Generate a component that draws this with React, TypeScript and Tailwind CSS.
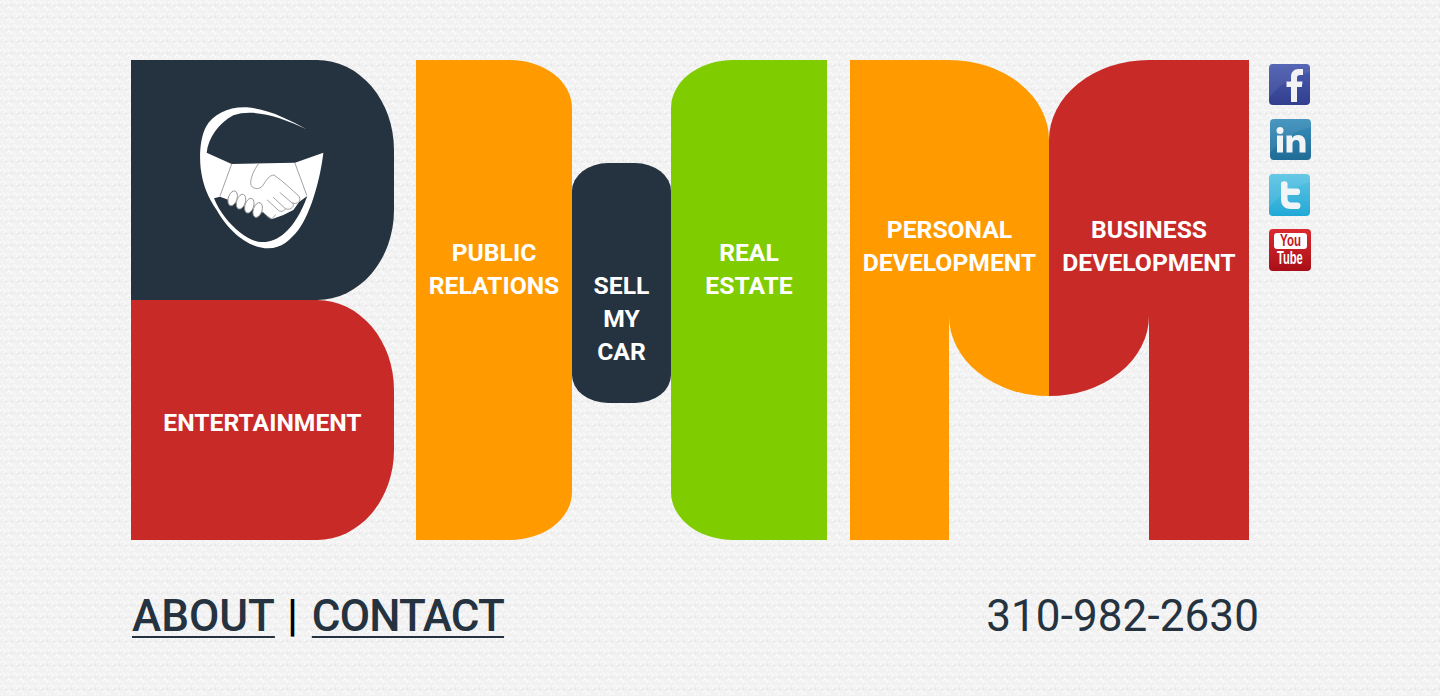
import React from "react";

const font = "font-['Roboto','Liberation_Sans',sans-serif]";

function Backdrop() {
  return (
    <svg className="absolute inset-0 w-full h-full" aria-hidden="true">
      <defs>
        <pattern id="weave" width="12" height="12" patternUnits="userSpaceOnUse">
          <rect width="12" height="12" fill="#f1f1f1" />
          <path d="M0 3 L3 1 L6 3 L4 5 M6 9 L9 7 L12 9 L10 11 M7 1 L10 3 M1 8 L3 11" stroke="#fbfbfb" strokeWidth="1.3" fill="none" />
          <path d="M5 6 L7 5 M11 4 L12 6 M2 6 L1 5" stroke="#e4e4e4" strokeWidth="1" fill="none" />
        </pattern>
      </defs>
      <rect width="100%" height="100%" fill="url(#weave)" />
    </svg>
  );
}

function Logo() {
  return (
    <svg width="145" height="155" viewBox="0 0 435 465" className="block">
      <path
        d="M350 88 C300 60 235 26 170 22 C115 20 70 42 48 80 C30 115 28 165 32 205 C38 255 55 295 80 330 C110 385 170 445 235 445 C275 445 300 420 325 390 C365 335 392 230 400 158 L315 188 L125 192 L50 158 C55 115 85 70 130 46 C190 25 270 50 350 88 Z"
        fill="#fff"
      />
      <path
        d="M72 295 L90 290 L220 338 L245 358 L280 345 L310 330 L328 305 L352 288 C335 335 312 375 285 398 C262 418 238 428 210 426 C175 422 135 390 105 352 C92 335 80 315 72 295 Z"
        fill="#253340"
      />
      <g fill="none" stroke="#8f8f8f" strokeWidth="2.5" strokeLinecap="round" strokeLinejoin="round">
        <path d="M125 192 L90 288" />
        <path d="M315 190 L350 285" />
        <path d="M205 192 C192 210 182 232 182 250 C184 268 208 272 220 255 C228 240 238 226 252 225 C280 245 305 268 328 290 C334 305 320 315 308 309" />
        <path d="M270 278 L310 312 C312 322 298 332 286 326 L250 292" />
        <path d="M286 327 C280 336 270 336 264 330 L232 300" />
        <path d="M256 345 C250 358 240 358 232 350 L218 335" />
      </g>
      <g fill="#fff" stroke="#8f8f8f" strokeWidth="2.5">
        <ellipse cx="128" cy="295" rx="13" ry="23" transform="rotate(18 128 295)" />
        <ellipse cx="153" cy="305" rx="13" ry="23" transform="rotate(18 153 305)" />
        <ellipse cx="178" cy="317" rx="13" ry="23" transform="rotate(18 178 317)" />
        <ellipse cx="203" cy="330" rx="13" ry="23" transform="rotate(18 203 330)" />
      </g>
    </svg>
  );
}

const gloss = "M0 0 H41 V8 C26 12 10 20 0 34 Z";

function Social() {
  return (
    <div className="flex flex-col ml-[20px] mt-[4px]">
      <div className="w-[41px] h-[41px] rounded-[4px] bg-gradient-to-b from-[#4a5cb0] to-[#333f8e] overflow-hidden">
        <svg viewBox="0 0 41 41" width="41" height="41">
          <path d={gloss} fill="#fff" opacity="0.07" />
          <path d="M22 38 V23 H17.5 V17.5 H22 V13 C22 8 25 5 29.5 5 H34 V11 H31 C28.8 11 28 12 28 14 V17.5 H33.5 L32.8 23 H28 V38 Z" fill="#f2f2f4" />
        </svg>
      </div>
      <div className="w-[41px] h-[41px] rounded-[4px] bg-gradient-to-b from-[#3a8fbd] to-[#1f6c96] overflow-hidden mt-[14px] ml-[1px]">
        <svg viewBox="0 0 41 41" width="41" height="41" fill="#f2f4f6">
          <path d={gloss} fill="#fff" opacity="0.07" />
          <circle cx="10" cy="11.5" r="3.5" />
          <rect x="7" y="16.5" width="6" height="17" />
          <path d="M16.5 16.5 H22 V19 C23.5 17 25.5 16 28 16 C33 16 35.5 19 35.5 24 V33.5 H29.5 V25 C29.5 22.5 28.5 21 26.3 21 C24 21 22.5 22.6 22.5 25 V33.5 H16.5 Z" />
        </svg>
      </div>
      <div className="w-[41px] h-[42px] rounded-[4px] bg-gradient-to-b from-[#5cc4e4] to-[#1ea9d6] overflow-hidden mt-[14px]">
        <svg viewBox="0 0 41 42" width="41" height="42">
          <path d={gloss} fill="#fff" opacity="0.07" />
          <path d="M12 9.5 C12 6.5 18.5 6.5 18.5 9.5 V14.5 H28.5 C32 14.5 32 21 28.5 21 H18.5 V24.5 C18.5 27 20 28.5 22.5 28.5 H28.5 C32.5 28.5 32.5 35 28.5 35 H21.5 C15.5 35 12 31 12 25.5 Z" fill="#f1f5f7" />
        </svg>
      </div>
      <div className="w-[42px] h-[42px] rounded-[4px] bg-gradient-to-b from-[#dc2a30] to-[#a80f18] flex flex-col items-center mt-[13px] pt-[4px]">
        <div className="w-[33px] h-[16px] rounded-[3px] bg-white text-center">
          <div className="text-[#c6161e] text-[16px] leading-[16px] font-bold font-['Liberation_Sans',sans-serif] scale-x-[0.72]">You</div>
        </div>
        <div className="text-white text-[18px] leading-[19px] font-bold font-['Liberation_Sans',sans-serif] scale-x-[0.62]">
          Tube
        </div>
      </div>
    </div>
  );
}

const label = "text-white text-[24.7px] leading-[33px] font-bold text-center uppercase";

export default function App() {
  return (
    <div className={`relative h-[696px] overflow-hidden ${font}`}>
      <Backdrop />
      <div className="relative pl-[131px] pt-[60px]">
        <div className="flex items-start h-[480px]">
          <div className="flex flex-col w-[263px] mr-[22px]">
            <div className="h-[240px] bg-[#253340] rounded-tr-[77px_90px] rounded-br-[77px_90px] pl-[59px] pt-[40px]">
              <Logo />
            </div>
            <div className={`h-[240px] bg-[#c82a28] rounded-tr-[77px_90px] rounded-br-[77px_90px] pt-[106px] ${label}`}>
              Entertainment
            </div>
          </div>

          <div className={`w-[156px] h-[480px] bg-[#ff9a00] rounded-tr-[62px_48px] rounded-br-[62px_48px] pt-[176px] ${label}`}>
            Public<br />Relations
          </div>
          <div className={`w-[99px] h-[240px] mt-[103px] bg-[#253340] rounded-[36px/28px] pt-[106px] ${label}`}>
            Sell<br />My<br />Car
          </div>
          <div className={`w-[156px] h-[480px] bg-[#7fcd00] rounded-tl-[62px_48px] rounded-bl-[62px_48px] pt-[176px] ${label} mr-[23px]`}>
            Real<br />Estate
          </div>

          <div className="flex flex-col w-[199px]">
            <div className={`h-[256px] bg-[#ff9a00] rounded-tr-[100px_80px] pt-[153px] ${label}`}>
              Personal<br />Development
            </div>
            <div className="flex">
              <div className="w-[99px] h-[224px] bg-[#ff9a00]" />
              <div className="w-[100px] h-[80px] bg-[#ff9a00] rounded-bl-[100px_80px]" />
            </div>
          </div>
          <div className="flex flex-col w-[200px]">
            <div className={`h-[256px] bg-[#c82a28] rounded-tl-[100px_80px] pt-[153px] ${label}`}>
              Business<br />Development
            </div>
            <div className="flex">
              <div className="w-[100px] h-[80px] bg-[#c82a28] rounded-br-[100px_80px]" />
              <div className="w-[100px] h-[224px] bg-[#c82a28]" />
            </div>
          </div>
          <Social />
        </div>

        <div className="flex items-start justify-between w-[1127px] mt-[50px] ml-[1px] text-[#253340]">
          <div className="text-[44px] leading-[52px] font-medium">
            <a className="underline decoration-2 underline-offset-[5px]">ABOUT</a>
            <span className="ml-[12px] mr-[14px] font-medium text-black">|</span>
            <a className="underline decoration-2 underline-offset-[5px] tracking-[-0.85px]">CONTACT</a>
          </div>
          <div className="text-[44px] leading-[52px] font-normal tracking-[0.1px]">310-982-2630</div>
        </div>
      </div>
    </div>
  );
}
